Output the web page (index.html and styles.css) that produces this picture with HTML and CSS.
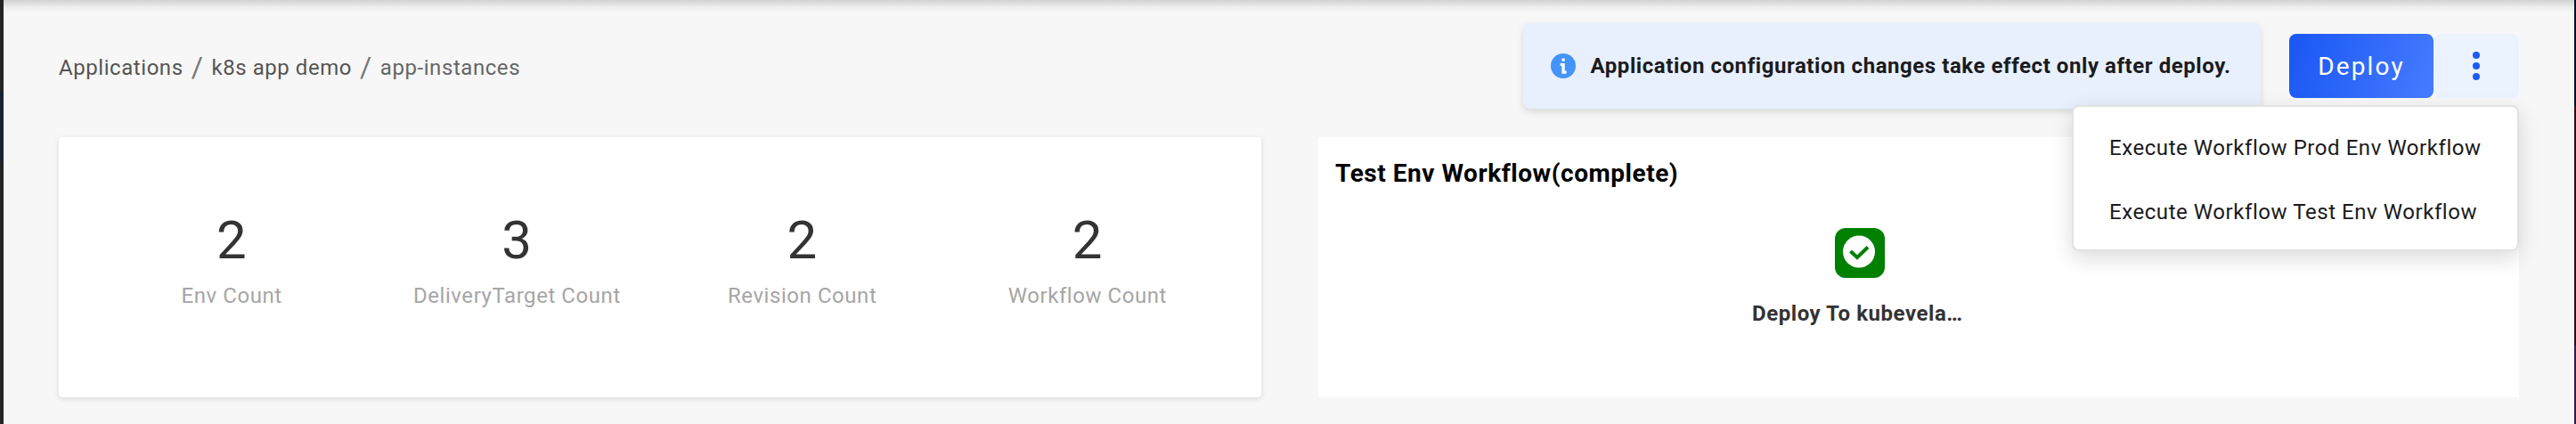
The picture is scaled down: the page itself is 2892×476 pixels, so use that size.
FILE: index.html
```html
<!DOCTYPE html>
<html lang="en">
<head>
<meta charset="utf-8">
<title>app-instances</title>
<link rel="stylesheet" href="styles.css">
</head>
<body class="desktop">
<div class="page">
  <header class="header">
    <nav class="breadcrumb">
      <a class="crumb">Applications</a>
      <span class="slash">/</span>
      <a class="crumb">k8s app demo</a>
      <span class="slash">/</span>
      <span class="crumb crumb-current">app-instances</span>
    </nav>
    <div class="notice">
      <svg class="notice-icon" viewBox="0 0 28 28" aria-hidden="true">
        <circle cx="14" cy="14" r="14" fill="#4494f9"/>
        <path d="M12.5 5.6h3.2v3.2h-3.2zM10.6 10.9h5.1v8.6h1.9v3.2h-5.2v-8.7h-1.8z" fill="#fff"/>
      </svg>
      <span>Application configuration changes take effect only after deploy.</span>
    </div>
    <div class="actions">
      <button class="deploy">Deploy</button>
      <button class="more" aria-label="More">
        <svg class="more-icon" viewBox="0 0 8 32" aria-hidden="true">
          <g fill="#1d5bf0"><circle cx="4" cy="4" r="4"/><circle cx="4" cy="16" r="4"/><circle cx="4" cy="28" r="4"/></g>
        </svg>
      </button>
      <ul class="menu">
        <li class="menu-item">Execute Workflow Prod Env Workflow</li>
        <li class="menu-item">Execute Workflow Test Env Workflow</li>
      </ul>
    </div>
  </header>
  <main class="cards">
    <section class="card stats">
      <div class="stat"><span class="stat-value">2</span><span class="stat-label">Env Count</span></div>
      <div class="stat"><span class="stat-value">3</span><span class="stat-label">DeliveryTarget Count</span></div>
      <div class="stat"><span class="stat-value">2</span><span class="stat-label">Revision Count</span></div>
      <div class="stat"><span class="stat-value">2</span><span class="stat-label">Workflow Count</span></div>
    </section>
    <section class="card workflow">
      <h2 class="workflow-title">Test Env Workflow(complete)</h2>
      <div class="step">
        <svg class="step-icon" viewBox="0 0 56 56" aria-hidden="true">
          <rect width="56" height="56" rx="12" fill="#008000"/>
          <circle cx="27" cy="26.5" r="18" fill="#fff"/>
          <path d="M17.5 26L25 33L37 21.5" fill="none" stroke="#008000" stroke-width="4"/>
        </svg>
        <span class="step-label">Deploy To kubevela…</span>
      </div>
    </section>
  </main>
</div>
</body>
</html>
```
FILE: styles.css
```css
* { box-sizing: border-box; }

.desktop {
  margin: 0;
  padding: 0 2px 0 4px;
  height: 476px;
  overflow: hidden;
  background:
    linear-gradient(#242424 0 100px, #1a2233 105px 178px, #242424 184px) left / 4px 100% no-repeat,
    linear-gradient(#080d24 0 118px, #360b12 119px 387px, #2c1a50 388px) right / 2px 100% no-repeat;
  font-family: Roboto, "Liberation Sans", sans-serif;
  font-size: 24px;
  line-height: 36px;
  letter-spacing: 0.56px;
  color: #1b1b1d;
}

.page {
  height: 476px;
  background: linear-gradient(#d2d2d2, #dedede 4px, #eeeeee 8px, #f5f5f5 13px, #f7f7f7 18px) #f7f7f7;
}

.header {
  display: flex;
  align-items: center;
  height: 154px;
  padding: 0 62px 6px;
}

.breadcrumb {
  display: flex;
  align-items: center;
  gap: 9px;
  margin-right: auto;
  padding-top: 4px;
  color: #555;
}
.slash {
  margin-top: -2px;
  font-size: 32px;
  color: #777;
}
.crumb-current { color: #666; }

.notice {
  display: flex;
  align-items: center;
  width: 828px;
  height: 96px;
  margin-right: 32px;
  padding-left: 31px;
  border-radius: 8px;
  background: #e8f0fe;
  box-shadow: 0 4px 8px rgba(0, 0, 0, 0.12);
  font-weight: 700;
  white-space: nowrap;
}
.notice-icon {
  width: 28px;
  height: 28px;
  margin-right: 16.5px;
}

.actions {
  display: flex;
  position: relative;
}
.deploy,
.more {
  height: 72px;
  padding: 0;
  border: 0;
  border-radius: 8px;
}
.deploy {
  width: 162px;
  background: linear-gradient(110deg, #1b58f4 5%, #447aff 95%);
  color: #fff;
  font: 400 28px Roboto, "Liberation Sans", sans-serif;
  letter-spacing: 2.15px;
}
.more {
  display: flex;
  align-items: center;
  justify-content: center;
  width: 96px;
  background: #eaf3ff;
}
.more-icon {
  width: 8px;
  height: 32px;
}

.menu {
  position: absolute;
  top: 80px;
  right: 0;
  width: 502px;
  margin: 0;
  padding: 10px 0 6px 40px;
  border: 2px solid #e2e2e3;
  border-radius: 8px;
  background: #fff;
  box-shadow: 0 8px 24px rgba(0, 0, 0, 0.14);
  list-style: none;
}
.menu-item {
  line-height: 72px;
  white-space: nowrap;
}

.cards {
  display: grid;
  grid-template-columns: 1350px 1348px;
  gap: 64px;
  padding-left: 62px;
}
.card {
  height: 292px;
  background: #fff;
}

.stats {
  display: grid;
  grid-template-columns: repeat(4, 1fr);
  padding: 85.5px 35px 0 34px;
  border-radius: 4px;
  box-shadow: 0 2px 6px rgba(0, 0, 0, 0.12);
}
.stat {
  display: flex;
  flex-direction: column;
  align-items: center;
  gap: 14.5px;
}
.stat-value {
  font-size: 60px;
  line-height: 60px;
  color: #333;
}
.stat-label { color: #a6a6a6; }

.workflow { padding: 23px 19px 0; }
.workflow-title {
  margin: 0 0 43px;
  font-size: 28px;
  font-weight: 700;
  line-height: 36px;
  letter-spacing: 0.54px;
  color: #000;
}
.step {
  display: flex;
  flex-direction: column;
  width: 241px;
  margin-left: 468px;
}
.step-icon {
  width: 56px;
  height: 56px;
  margin: 0 auto 22px;
}
.step-label {
  font-weight: 700;
  color: #333;
}
```
